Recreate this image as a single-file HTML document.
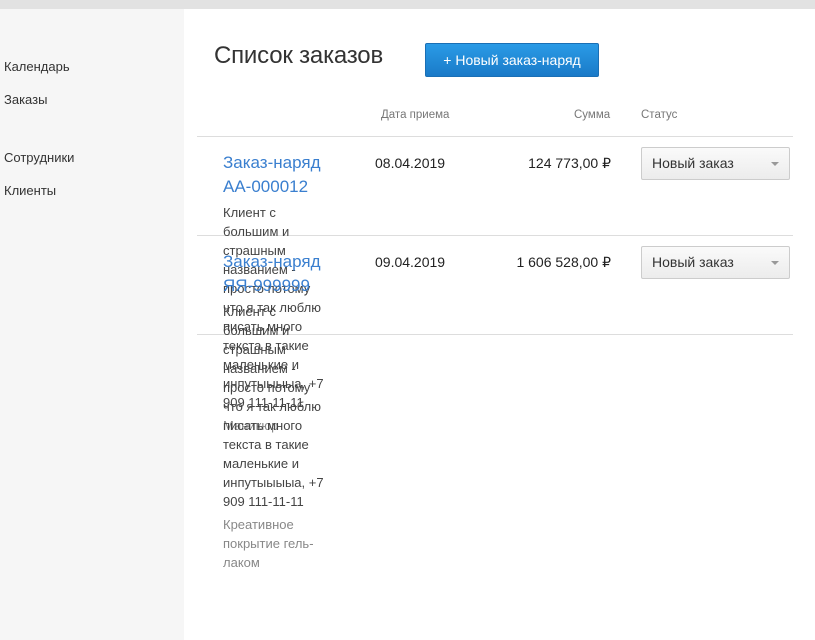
<!DOCTYPE html>
<html><head><meta charset="utf-8"><style>
*{margin:0;padding:0;box-sizing:border-box}
body{width:815px;height:640px;position:relative;background:#fff;font-family:"Liberation Sans","Noto Sans CJK SC",sans-serif;color:#333;overflow:hidden}
.a{position:absolute;white-space:nowrap}
.top{left:0;top:0;width:815px;height:9px;background:#e2e2e2}
.side{left:0;top:9px;width:184px;height:631px;background:#f6f6f6}
.nav{font-size:13px;color:#333;left:4px}
h1{position:absolute;left:214px;top:42px;font-size:24px;font-weight:normal;color:#333;letter-spacing:-0.2px}
.btn{left:425px;top:43px;width:174px;height:34px;background:linear-gradient(#2a9be6,#1a7ac8);border:1px solid #1a6fb5;border-radius:2px;color:#fff;font-size:14px;line-height:32px;text-align:center}
.th{font-size:11.5px;color:#777;top:109px}
.ln{left:197px;width:596px;height:1px;background:#ddd}
.t{font-size:17px;color:#3a7fcf;line-height:24px;left:223px}
.c{font-size:13px;line-height:19px;left:223px;color:#444}
.g{color:#888}
.v{font-size:14px;color:#222}
.sel{left:641px;width:149px;height:33px;border:1px solid #ccc;border-radius:2px;background:linear-gradient(#fafafa,#ececec);font-size:14px;color:#333;line-height:31px;padding-left:10px}
.sel:after{content:"";position:absolute;right:10px;top:14px;border:4px solid transparent;border-top:4px solid #999}
</style></head><body>
<div class="a top"></div>
<div class="a side"></div>
<div class="a nav" style="top:59px">Календарь</div>
<div class="a nav" style="top:92px">Заказы</div>
<div class="a nav" style="top:150px">Сотрудники</div>
<div class="a nav" style="top:183px">Клиенты</div>
<h1>Список заказов</h1>
<div class="a btn">+ Новый заказ-наряд</div>
<div class="a th" style="left:381px">Дата приема</div>
<div class="a th" style="left:574px">Сумма</div>
<div class="a th" style="left:641px">Статус</div>
<div class="a ln" style="top:136px"></div>
<div class="a ln" style="top:235px"></div>
<div class="a ln" style="top:334px"></div>

<div class="a t" style="top:151px">Заказ-наряд<br>АА-000012</div>
<div class="a c" style="top:203px">Клиент с<br>большим и<br>страшным<br>названием -<br>просто потому<br>что я так люблю<br>писать много<br>текста в такие<br>маленькие и<br>инпутыыыыа, +7<br>909 111-11-11<br><span class="g" style="display:block;margin-top:4px">Маникюр</span></div>
<div class="a v" style="left:375px;top:155px">08.04.2019</div>
<div class="a v" style="right:204px;top:155px">124 773,00 ₽</div>
<div class="a sel" style="top:147px">Новый заказ</div>

<div class="a t" style="top:250px">Заказ-наряд<br>ЯЯ-999999</div>
<div class="a c" style="top:302px">Клиент с<br>большим и<br>страшным<br>названием -<br>просто потому<br>что я так люблю<br>писать много<br>текста в такие<br>маленькие и<br>инпутыыыыа, +7<br>909 111-11-11<br><span class="g" style="display:block;margin-top:4px">Креативное<br>покрытие гель-<br>лаком</span></div>
<div class="a v" style="left:375px;top:254px">09.04.2019</div>
<div class="a v" style="right:204px;top:254px">1 606 528,00 ₽</div>
<div class="a sel" style="top:246px">Новый заказ</div>
</body></html>
